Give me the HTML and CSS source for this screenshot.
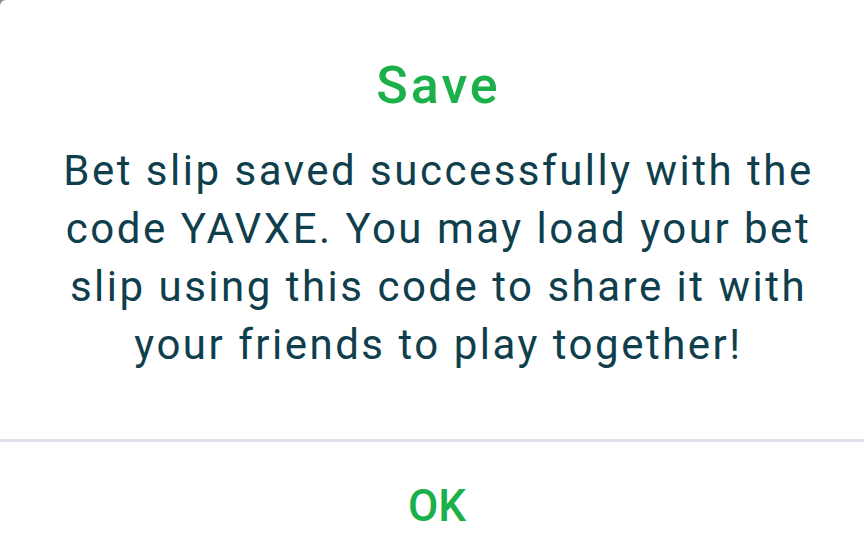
FILE: index.html
```html
<!DOCTYPE html>
<html lang="en">
<head>
    <meta charset="UTF-8">
    <meta name="viewport" content="width=device-width, initial-scale=1.0">
    <title>Save</title>
    <link rel="stylesheet" href="styles.css">
</head>
<body>

    <!-- Mentés dialógus -->
    <div class="dialog">
        <div class="dialog-body">
            <h1 class="dialog-title">Save</h1>
            <p class="dialog-text">Bet slip saved successfully with the code YAVXE. You may load your bet slip using this code to share it with your friends to play together!</p>
        </div>
        <div class="dialog-actions">
            <button class="ok-button">OK</button>
        </div>
    </div>

</body>
</html>
```

FILE: styles.css
```css
html, body {
    margin: 0;
    padding: 0;
    height: 100%;
    background-color: #8a8a8a;
}
body {
    font-family: Roboto, "Noto Sans", Arial, sans-serif;
}
.dialog {
    background-color: #fff;
    height: 100%;
    border-top-left-radius: 6px;
    display: flex;
    flex-direction: column;
}
.dialog-body {
    padding: 55px 44px 0 57px;
    height: 384px;
    border-bottom: 3px solid #e0dfea;
    text-align: center;
}
.dialog-title {
    margin: 0;
    color: #1cb04a;
    font-size: 52px;
    font-weight: 500;
    letter-spacing: 3px;
    line-height: 62px;
}
.dialog-text {
    margin: 25px 0 0;
    color: #0f3e4c;
    font-size: 42px;
    letter-spacing: 2.5px;
    line-height: 58px;
}
.dialog-actions {
    flex: 1;
    display: flex;
    align-items: center;
    justify-content: center;
    padding-left: 10px;
}
.ok-button {
    background: none;
    border: none;
    color: #1cb04a;
    font-family: inherit;
    font-size: 44px;
    font-weight: 500;
    padding: 0;
    margin-top: 18px;
}
```
